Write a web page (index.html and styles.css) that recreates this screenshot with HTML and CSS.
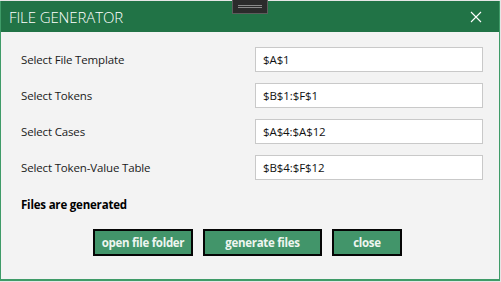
FILE: index.html
```html
<!DOCTYPE html>
<html>
<head>
<meta charset="utf-8">
<link rel="stylesheet" href="styles.css">
</head>
<body>
<div class="dialog">
  <div class="titlebar">
    <span class="title">FILE GENERATOR</span>
    <svg class="close-x" width="12" height="12" viewBox="0 0 12 12"><path d="M1 1 L11 11 M11 1 L1 11" stroke="#ffffff" stroke-width="1.1" fill="none"/></svg>
  </div>
  <div class="content">
    <div class="form">
      <label class="lbl">Select File Template</label>
      <div class="field">$A$1</div>
      <label class="lbl">Select Tokens</label>
      <div class="field">$B$1:$F$1</div>
      <label class="lbl">Select Cases</label>
      <div class="field">$A$4:$A$12</div>
      <label class="lbl">Select Token-Value Table</label>
      <div class="field">$B$4:$F$12</div>
    </div>
    <div class="status">Files are generated</div>
    <div class="buttons">
      <button class="btn btn-open">open file folder</button>
      <button class="btn btn-gen">generate files</button>
      <button class="btn btn-close">close</button>
    </div>
  </div>
  <div class="handle"><span class="hl"></span><span class="hl"></span></div>
</div>
</body>
</html>
```
FILE: styles.css
```css
html, body {
  margin: 0;
  padding: 0;
  background: #e6e6e6;
  width: 501px;
  height: 282px;
  overflow: hidden;
}
.dialog {
  position: relative;
  margin-top: 1px;
  width: 498px;
  height: 278px;
  border-left: 1px solid #3f9b68;
  border-right: 1px solid #3f9b68;
  border-bottom: 2px solid #3f9b68;
  background: #f3f3f3;
  display: flex;
  flex-direction: column;
  font-family: "Open Sans", "Noto Sans", sans-serif;
}
.titlebar {
  height: 31px;
  background: #217346;
  display: flex;
  align-items: center;
  justify-content: space-between;
  padding: 0 17px 0 8px;
}
.title {
  color: #ffffff;
  font-size: 15px;
  font-weight: 300;
  letter-spacing: -0.1px;
}
.close-x { display: block; }
.content {
  padding: 15px 0 0 20px;
  display: flex;
  flex-direction: column;
}
.form {
  display: grid;
  grid-template-columns: 234px 228px;
  grid-auto-rows: 25px;
  row-gap: 11px;
  align-items: center;
}
.lbl {
  font-size: 11.5px;
  letter-spacing: -0.15px;
  color: #1a1a1a;
}
.field {
  height: 25px;
  box-sizing: border-box;
  border: 1px solid #c9c9c9;
  background: #ffffff;
  font-size: 11.5px;
  letter-spacing: -0.1px;
  color: #111;
  padding-left: 7px;
  display: flex;
  align-items: center;
}
.status {
  margin-top: 17px;
  font-size: 11.5px;
  letter-spacing: -0.2px;
  font-weight: 700;
  color: #000;
}
.buttons {
  margin-top: 17px;
  margin-left: -20px;
  display: flex;
  justify-content: center;
  gap: 10px;
  padding-right: 5px;
}
.btn {
  height: 27px;
  box-sizing: border-box;
  border: 2px solid #050505;
  background: #42956a;
  color: #eef5f0;
  font-family: "Open Sans", "Noto Sans", sans-serif;
  font-weight: 700;
  font-size: 11.5px;
  letter-spacing: -0.3px;
  padding: 0;
}
.btn-open { width: 100px; }
.btn-gen { width: 119px; }
.btn-close { width: 70px; }
.handle {
  position: absolute;
  top: -1px;
  left: 231px;
  width: 34px;
  height: 13px;
  background: #2b2b2b;
  border: 1px solid #5c5c5c;
  border-top: none;
  display: flex;
  flex-direction: column;
  align-items: center;
  justify-content: center;
  gap: 1px;
}
.hl {
  display: block;
  width: 24px;
  height: 1px;
  background: #8a8a8a;
}
```
